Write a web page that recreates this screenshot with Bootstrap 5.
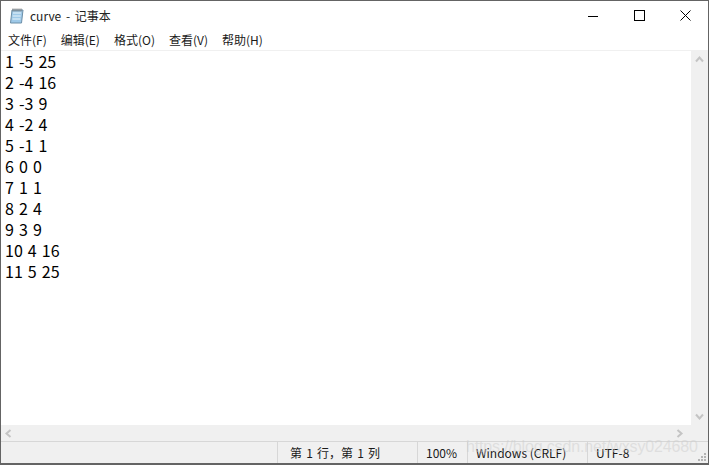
<!DOCTYPE html>
<html lang="zh">
<head>
  <meta charset="UTF-8" />
  <title>curve - 记事本</title>
  <meta name="viewport" content="width=device-width, initial-scale=1" />
  <link href="https://cdn.jsdelivr.net/npm/bootstrap@5.3.0/dist/css/bootstrap.min.css" rel="stylesheet" />
  <style>
    html, body { height: 100%; margin: 0; overflow: hidden; background: #fff; }
    body { font-family: "Noto Sans CJK SC", "Noto Sans", sans-serif; color: #000; }
    .win-frame {
      height: 465px;
      border: 1px solid #646464;
      border-bottom-width: 2px;
      position: relative;
    }
    .title-bar { height: 29px; font-size: 12px; line-height: 29px; }
    .app-icon { margin: 0 5px 0 8px; }
    .title-text { font-size: 12px; word-spacing: 2px; color: #222; }
    .win-btn { width: 46px; height: 29px; }
    .menu-strip { height: 20px; font-size: 12px; line-height: 20px; padding-left: 7px; gap: 14px; color: #1a1a1a; }
    .menu-strip span { white-space: nowrap; }
    .mid-area { height: 375px; border-top: 1px solid #f0f0f0; }
    .edit-text {
      font-family: "Noto Sans CJK SC", "Open Sans", sans-serif;
      font-size: 16px;
      line-height: 21px;
      word-spacing: 1.5px;
      padding: 0 0 0 4px;
      color: #000;
      white-space: pre;
      overflow: visible;
      margin: 0;
    }
    .scroll-v { width: 17px; background: #f0f0f0; }
    .scroll-h { height: 16px; background: #f0f0f0; padding: 0 3px; }
    .status-strip { height: 22px; background: #f0f0f0; border-top: 1px solid #d7d7d7; font-size: 12px; line-height: 22px; color: #1a1a1a; }
    .status-cell { border-left: 1px solid #d7d7d7; height: 100%; padding-left: 12px; white-space: nowrap; }
    .cell-a { width: 276px; border-left: 0; padding: 0; }
    .cell-b { width: 140px; word-spacing: 1.5px; }
    .cell-c { width: 50px; padding-left: 8px; }
    .cell-d { width: 120px; padding-left: 8px; }
    .cell-e { flex: 1; padding-left: 8px; }
    .grip { position: absolute; right: 1px; bottom: 1px; }
    .mark-text {
      position: absolute;
      left: 465px;
      top: 436px;
      font-family: "Liberation Sans", sans-serif;
      font-size: 16px;
      line-height: 20px;
      letter-spacing: -.15px;
      color: rgba(205, 205, 205, .5);
      white-space: nowrap;
    }
  </style>
</head>
<body>

<div class="win-frame d-flex flex-column">
  <div class="title-bar d-flex align-items-center">
    <svg class="app-icon" width="16" height="18" viewBox="0 0 16 18">
      <path d="M3 3h11l-1.500 13H1.500z" fill="#9ec9e8" stroke="#6d8fa8"/>
      <path d="M4 6h8M3.700 9h8M3.400 12h8" stroke="#e8f4fb"/>
      <path d="M4 1.500v3M6 1.500v3M8 1.500v3M10 1.500v3M12 1.500v3" stroke="#777"/>
    </svg>
    <span class="title-text">curve - 记事本</span>
    <div class="ms-auto d-flex">
      <div class="win-btn d-flex align-items-center justify-content-center">
        <svg width="10" height="10" viewBox="0 0 10 10"><path d="M0 5.500h10" stroke="#000"/></svg>
      </div>
      <div class="win-btn d-flex align-items-center justify-content-center">
        <svg width="11" height="11" viewBox="0 0 11 11"><rect x=".5" y=".5" width="10" height="10" fill="none" stroke="#000"/></svg>
      </div>
      <div class="win-btn d-flex align-items-center justify-content-center">
        <svg width="11" height="11" viewBox="0 0 11 11"><path d="M.5.500l10 10M10.500.500l-10 10" stroke="#000"/></svg>
      </div>
    </div>
  </div>

  <div class="menu-strip d-flex">
    <span>文件(F)</span><span>编辑(E)</span><span>格式(O)</span><span>查看(V)</span><span>帮助(H)</span>
  </div>

  <div class="mid-area d-flex">
    <div class="flex-grow-1"><pre class="edit-text">1 -5 25
2 -4 16
3 -3 9
4 -2 4
5 -1 1
6 0 0
7 1 1
8 2 4
9 3 9
10 4 16
11 5 25</pre></div>
    <div class="scroll-v d-flex flex-column justify-content-between align-items-center py-1">
      <svg width="9" height="9" viewBox="0 0 9 9"><path d="M1 6.500l3.500-4 3.500 4" fill="none" stroke="#c4c4c4" stroke-width="2"/></svg>
      <svg width="9" height="9" viewBox="0 0 9 9"><path d="M1 2.500l3.500 4 3.500-4" fill="none" stroke="#c4c4c4" stroke-width="2"/></svg>
    </div>
  </div>

  <div class="scroll-h d-flex justify-content-between align-items-center pe-4">
    <svg width="9" height="9" viewBox="0 0 9 9"><path d="M6.500 1l-4 3.500 4 3.500" fill="none" stroke="#c4c4c4" stroke-width="2"/></svg>
    <svg width="9" height="9" viewBox="0 0 9 9"><path d="M2.500 1l4 3.500-4 3.500" fill="none" stroke="#c4c4c4" stroke-width="2"/></svg>
  </div>

  <div class="status-strip d-flex">
    <div class="status-cell cell-a"></div>
    <div class="status-cell cell-b">第 1 行，第 1 列</div>
    <div class="status-cell cell-c">100%</div>
    <div class="status-cell cell-d">Windows (CRLF)</div>
    <div class="status-cell cell-e">UTF-8</div>
  </div>

  <svg class="grip" width="10" height="10" viewBox="0 0 10 10">
    <path d="M7 1h2v2H7zM4 4h2v2H4zM7 4h2v2H7zM1 7h2v2H1zM4 7h2v2H4zM7 7h2v2H7z" fill="#b4b4b4"/>
  </svg>
  <div class="mark-text">https://blog.csdn.net/wxsy024680</div>
</div>

</body>
</html>
